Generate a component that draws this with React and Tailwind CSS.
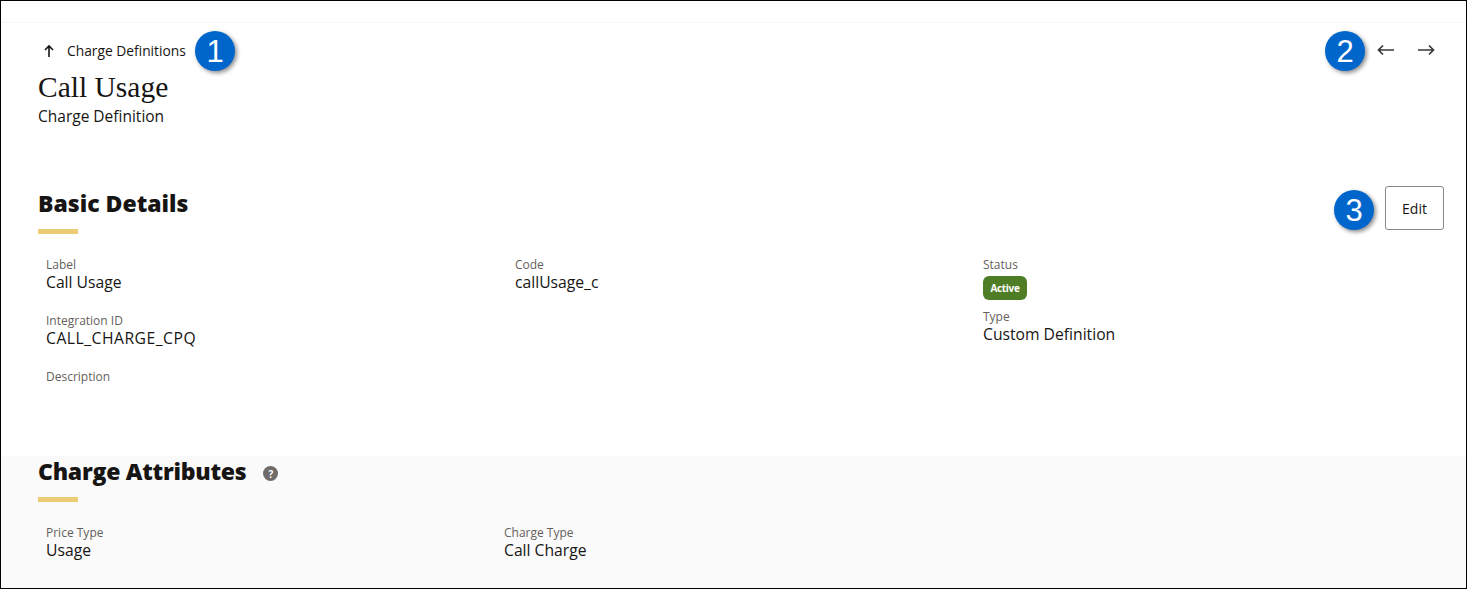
import React from "react";

const sans = "font-['Open_Sans','Noto_Sans',sans-serif]";

function Badge({ n, className }) {
  return (
    <div className={`absolute flex h-10 w-10 items-center justify-center rounded-full bg-[#0066cc] text-[31px] leading-none text-white shadow-[2px_2px_4px_rgba(0,0,0,0.45)] font-['Liberation_Sans',sans-serif] ${className}`}>
      {n}
    </div>
  );
}

function Field({ label, value, className = "", valueClass = "" }) {
  return (
    <div className={className}>
      <div className="text-[12px] leading-[16px] text-[#655f5c]">{label}</div>
      {value && <div className={`text-[15.7px] leading-[18px] text-[#161513] ${valueClass}`}>{value}</div>}
    </div>
  );
}

function Heading({ children, className = "" }) {
  return (
    <div>
      <h2 className={`text-[23px] leading-[32px] font-extrabold text-[#161513] ${className}`}>{children}</h2>
      <div className="mt-[10px] h-[5px] w-10 bg-[#eccb75]" />
    </div>
  );
}

export default function App() {
  return (
    <div className={`relative flex h-[589px] w-[1467px] flex-col overflow-hidden border border-black bg-white ${sans}`}>
      <div className="h-[22px] shrink-0 border-b border-[#f7f7f7]" />

      <header className="flex shrink-0 items-start justify-between pl-[37px] pr-[31px]">
        <div>
          <div className="flex h-[54px] items-center pl-[5px] pt-[1px]">
            <svg width="12" height="14" viewBox="0 0 12 14" fill="none" stroke="#161513" strokeWidth="1.6" className="mr-[12px]">
              <path d="M6 13V2M2 6l4-4 4 4" />
            </svg>
            <span className="text-[13.8px] font-medium leading-4 text-[#161513]">Charge Definitions</span>
          </div>
          <div className="-mt-[7px] font-['Liberation_Serif',serif] text-[29.500px] leading-[34px] text-[#161513]">Call Usage</div>
          <div className="mt-[1px] text-[15.500px] leading-[22px] text-[#161513]">Charge Definition</div>
        </div>
        <div className="flex h-[54px] items-center gap-[24px]">
          <svg width="17" height="12" viewBox="0 0 17 12" fill="none" stroke="#3a3835" strokeWidth="1.7">
            <path d="M17 6H1.500M6 1.500 1.500 6 6 10.500" />
          </svg>
          <svg width="17" height="12" viewBox="0 0 17 12" fill="none" stroke="#3a3835" strokeWidth="1.7">
            <path d="M0 6h15.500M11 1.500 15.500 6 11 10.500" />
          </svg>
        </div>
      </header>

      <section className="flex-1 pl-[37px] pr-[22px] pt-[59px]">
        <div className="flex items-start justify-between">
          <div className="pt-[1px]"><Heading>Basic Details</Heading></div>
          <button className="h-[44px] w-[59px] rounded-[3px] border border-[#8a8785] bg-white pt-[1px] text-[14px] font-medium text-[#161513]">Edit</button>
        </div>
        <div className="mt-[23px] grid grid-cols-[469px_468px_1fr] pl-[8px]">
          <div className="flex flex-col gap-[22px]">
            <Field label="Label" value="Call Usage" />
            <Field label="Integration ID" value="CALL_CHARGE_CPQ" valueClass="tracking-[0.5px]" />
            <Field label="Description" />
          </div>
          <div>
            <Field label="Code" value="callUsage_c" />
          </div>
          <div className="flex flex-col">
            <Field label="Status" />
            <span className="mt-[3px] flex h-6 w-11 items-center justify-center rounded-[6px] bg-[#4f7d26] text-[10px] font-bold tracking-[-0.3px] text-white">Active</span>
            <Field label="Type" value="Custom Definition" className="mt-[9px]" />
          </div>
        </div>
      </section>

      <section className="h-[132px] shrink-0 bg-[#fafafa] pl-[37px]">
        <div className="-mt-[1px] flex items-start">
          <Heading className="tracking-[-0.25px]">Charge Attributes</Heading>
          <span className="ml-[17px] mt-[11px] flex h-[15px] w-[15px] items-center justify-center rounded-full bg-[#6f6c6a] text-[10px] font-bold leading-none text-white">?</span>
        </div>
        <div className="mt-[23px] grid grid-cols-[458px_1fr] pl-[8px]">
          <Field label="Price Type" value="Usage" />
          <Field label="Charge Type" value="Call Charge" />
        </div>
      </section>

      <Badge n="1" className="left-[194px] top-[30px]" />
      <Badge n="2" className="left-[1324px] top-[30px]" />
      <Badge n="3" className="left-[1333px] top-[189px]" />
    </div>
  );
}
